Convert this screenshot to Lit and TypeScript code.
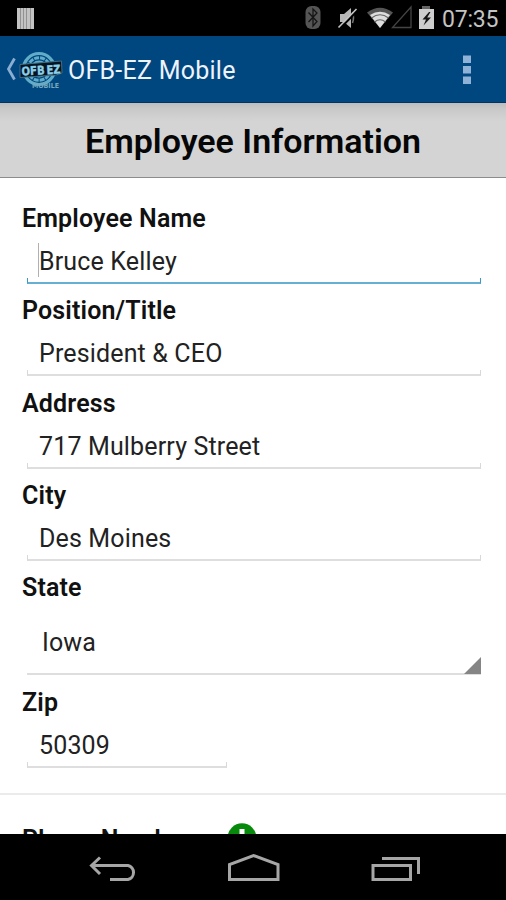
import { LitElement, html, css, svg } from "lit";
import { customElement, property } from "lit/decorators.js";
import { classMap } from "lit/directives/class-map.js";

@customElement("form-field")
class FormField extends LitElement {
  @property() label = "";
  @property() value = "";
  @property({ type: Boolean }) focused = false;
  @property({ type: Boolean }) short = false;
  @property({ type: Boolean }) select = false;

  static styles = css`
    :host { display: block; height: 92.33px; }
    :host([select]) { height: 115px; }
    .label { margin-left: 22px; height: 31px; font: 600 25px/33px Roboto, sans-serif; letter-spacing: 0.15px; color: #111; white-space: nowrap; }
    .box { display: flex; flex-direction: column; margin-left: 27px; width: 454px; height: 51px; }
    .box.short { width: 200px; }
    .text { position: relative; flex: 1; padding-left: 12px; font: 400 25px/58px Roboto, sans-serif; letter-spacing: 0.15px; color: #222; white-space: nowrap; height: 45px; }
    .caret { position: absolute; left: 10.5px; top: 10px; width: 1px; height: 34px; background: #b0b0b0; }
    .line { box-sizing: border-box; height: 6px; border: 1px solid #d8d8d8; border-top: 0; border-bottom-width: 2px; border-bottom-color: #dedede; }
    .line.focused { border-color: #3d97c4; border-bottom-color: #66aed3; }
    .select { margin-left: 27px; width: 454px; display: flex; justify-content: space-between; align-items: flex-end; box-sizing: border-box; height: 73px; border-bottom: 2px solid #dedede; }
    .select .text { padding-left: 15px; height: 71px; line-height: 82px; }
    svg { display: block; margin-bottom: -1px; }
  `;

  render() {
    return html`
      <div class="label">${this.label}</div>
      ${this.select
        ? html`<div class="select"><div class="text">${this.value}</div>
            <svg width="17" height="17"><path d="M17 0V17H0Z" fill="#858585"/></svg></div>`
        : html`<div class=${classMap({ box: true, short: this.short })}>
            <div class="text">${this.focused ? html`<span class="caret"></span>` : ""}${this.value}</div>
            <div class=${classMap({ line: true, focused: this.focused })}></div>
          </div>`}
    `;
  }
}

@customElement("app-root")
class AppRoot extends LitElement {
  static styles = css`
    :host { display: flex; flex-direction: column; width: 506px; height: 900px; background: #fff; overflow: hidden; font-family: Roboto, sans-serif; }
    svg { display: block; flex: none; }
    .status { height: 36px; flex: none; background: #000; }
    .status text { font: 400 23px Roboto, sans-serif; fill: #c4c4c4; }
    .bar { height: 66px; flex: none; display: flex; align-items: center; background: #00467f; border-bottom: 1px solid #003366; }
    .title { flex: 1; margin-left: 4px; padding-top: 4px; font-size: 25px; letter-spacing: 0.25px; line-height: 34px; color: #eef3fc; white-space: nowrap; }
    .head { height: 74px; flex: none; background: linear-gradient(#bdbdbd 0, #c9c9c9 6px, #d4d4d4 18px); border-bottom: 1px solid #8c8c8c; text-align: center; font: 600 34px/77px Roboto, sans-serif; color: #060606; white-space: nowrap; }
    .form { flex: 1; min-height: 0; overflow: hidden; padding-top: 24px; }
    .next { margin-top: 14px; border-top: 2px solid #ebebeb; display: flex; padding: 28px 0 0 22px; font: 600 25px/33px Roboto, sans-serif; letter-spacing: 0.15px; color: #111; white-space: nowrap; }
    .next span { width: 205px; }
    .nav { height: 66px; flex: none; background: #000; }
    .logo text { font: 700 12px "DejaVu Sans", sans-serif; fill: #8bd0ea; stroke: #8bd0ea; stroke-width: 0.4px; }
    .logo .sub { font-size: 7px; fill: #76a9bd; stroke: none; }
  `;

  status() {
    return svg`
      <rect x="17" y="8" width="17" height="21" fill="#c3c3c3"/>
      <path d="M20.500 8V29M23.500 8V29M26.500 8V29M30.500 8V29" stroke="#929292" stroke-width="1"/>
      <rect x="305.500" y="6" width="15" height="23" rx="6" fill="#555"/>
      <path d="M308.500 12.500L317 21.500L313 26V9L317 13L308.500 22" fill="none" stroke="#161616" stroke-width="1.3"/>
      <path d="M340 14H344L351 8V28L344 22H340Z" fill="#b7b7b7"/>
      <path d="M352.500 12Q354.500 17.500 352.500 23" stroke="#777" stroke-width="1.5" fill="none"/>
      <path d="M340 28.500L358 10" stroke="#000" stroke-width="2.2"/>
      <path d="M338.500 27.500L356.500 9" stroke="#c4c4c4" stroke-width="1.6"/>
      <path d="M367 12.500Q380 3 393 12.500L380 28Z" fill="#555"/>
      <path d="M370 15Q380 8.500 390 15L380 28Z" fill="#ddd"/>
      <path d="M371.500 18Q380 11.500 388.500 18M374.500 22Q380 17.500 385.500 22" stroke="#666" stroke-width="1.1" fill="none"/>
      <path d="M392.500 27.500H411V7Z" fill="none" stroke="#444" stroke-width="1.3"/>
      <rect x="422" y="6" width="8" height="4" fill="#666"/>
      <rect x="419" y="9" width="15" height="20" fill="#cecece"/>
      <path d="M429 12L422.500 19.500H426L423.500 25.500L431 17.500H427.200L430.500 12Z" fill="#161616"/>
      <text x="442" y="27" textLength="56.500">07:35</text>`;
  }

  logo() {
    return svg`
      <g fill="none" stroke="#61acc8">
        <circle cx="21" cy="21" r="15.500" stroke-width="3.200"/>
        <circle cx="21" cy="21" r="11.300" stroke-width="3" stroke-dasharray="5 1"/>
        <circle cx="21" cy="21" r="6" stroke-width="5"/>
      </g>
      <path d="M2 16.500L43.500 13L44 25L38 27L2 29.500Z" fill="#07131e" stroke="#3f6e85" stroke-width="1"/>
      <text x="3.500" y="26.500" textLength="23" lengthAdjust="spacingAndGlyphs" transform="rotate(-3 22 20)">OFB</text>
      <text x="28.500" y="26.500" textLength="14" lengthAdjust="spacingAndGlyphs" transform="rotate(-3 22 20)">EZ</text>
      <text class="sub" x="14" y="39.500" textLength="27" lengthAdjust="spacingAndGlyphs">MOBILE</text>`;
  }

  render() {
    return html`
      <svg class="status" width="506" height="36">${this.status()}</svg>
      <div class="bar">
        <svg width="18" height="30"><path d="M14.500 4.500L8.500 15L14.500 25.500" fill="none" stroke="#8badd2" stroke-width="2.800"/></svg>
        <svg class="logo" width="46" height="42">${this.logo()}</svg>
        <div class="title">OFB-EZ Mobile</div>
        <svg width="43" height="32"><path d="M0 2.500H8V10H0ZM0 13H8V20.500H0ZM0 23.500H8V31H0Z" fill="#8fb2d6"/></svg>
      </div>
      <div class="head">Employee Information</div>
      <div class="form">
        <form-field label="Employee Name" value="Bruce Kelley" focused></form-field>
        <form-field label="Position/Title" value="President &amp; CEO"></form-field>
        <form-field label="Address" value="717 Mulberry Street"></form-field>
        <form-field label="City" value="Des Moines"></form-field>
        <form-field label="State" value="Iowa" select></form-field>
        <form-field label="Zip" value="50309" short></form-field>
        <div class="next">
          <span>Phone Number</span>
          <svg width="30" height="30"><circle cx="15" cy="14.500" r="14.300" fill="#078a0b"/><path d="M12.500 6H17.500V11H22L15 22L8 11H12.500Z" fill="#fff"/></svg>
        </div>
      </div>
      <svg class="nav" width="506" height="66">
        <g fill="none" stroke="#a6a6a6" stroke-width="3">
          <path d="M100 23.500L91.500 31.500L100 40M92 31.500H128A7.200 7.200 0 0 1 128 45.500H110"/>
          <path d="M229.500 45.500V30.500L253.500 21.500L278 30.500V45.500Z"/>
          <path d="M373 31.500H410.500V45.500H373ZM382 24.500H418.500V40"/>
        </g>
      </svg>
    `;
  }
}
